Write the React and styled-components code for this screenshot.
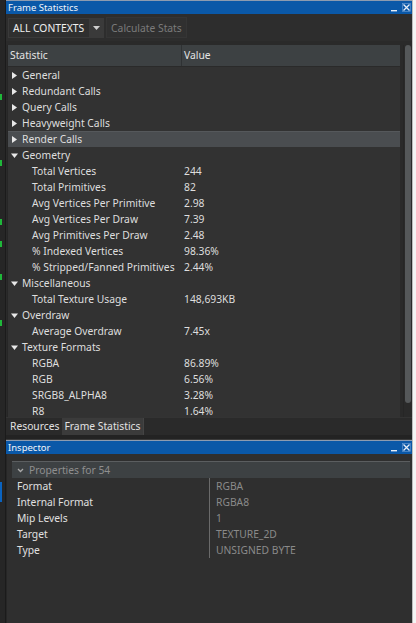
import React from 'react';
import styled, { createGlobalStyle } from 'styled-components';

const GlobalStyle = createGlobalStyle`
    *, *::before, *::after {
        box-sizing: border-box;
    }
    html, body {
        margin: 0;
        padding: 0;
        background: #f4f4f4;
    }
    body {
        font-family: "Noto Sans", "DejaVu Sans", sans-serif;
        font-size: 10.3px;
        color: #dcdcdc;
    }
`

const stats = [
    { name: 'General', kind: 'closed' },
    { name: 'Redundant Calls', kind: 'closed' },
    { name: 'Query Calls', kind: 'closed' },
    { name: 'Heavyweight Calls', kind: 'closed' },
    { name: 'Render Calls', kind: 'closed', selected: true },
    { name: 'Geometry', kind: 'open' },
    { name: 'Total Vertices', value: '244' },
    { name: 'Total Primitives', value: '82' },
    { name: 'Avg Vertices Per Primitive', value: '2.98' },
    { name: 'Avg Vertices Per Draw', value: '7.39' },
    { name: 'Avg Primitives Per Draw', value: '2.48' },
    { name: '% Indexed Vertices', value: '98.36%' },
    { name: '% Stripped/Fanned Primitives', value: '2.44%' },
    { name: 'Miscellaneous', kind: 'open' },
    { name: 'Total Texture Usage', value: '148,693KB' },
    { name: 'Overdraw', kind: 'open' },
    { name: 'Average Overdraw', value: '7.45x' },
    { name: 'Texture Formats', kind: 'open' },
    { name: 'RGBA', value: '86.89%' },
    { name: 'RGB', value: '6.56%' },
    { name: 'SRGB8_ALPHA8', value: '3.28%' },
    { name: 'R8', value: '1.64%' },
]

const props = [
    ['Format', 'RGBA'],
    ['Internal Format', 'RGBA8'],
    ['Mip Levels', '1'],
    ['Target', 'TEXTURE_2D'],
    ['Type', 'UNSIGNED BYTE'],
]

const marks = [
    { top: 94, color: '#1fb83a' },
    { top: 160, color: '#1fb83a' },
    { top: 219, color: '#1fb83a' },
    { top: 241, color: '#1fb83a' },
    { top: 274, color: '#1fb83a' },
    { top: 320, color: '#1fb83a' },
    { top: 482, color: '#0a63c0', h: 20 },
]

const Arrow = ({ open }) => (
    <svg width="7" height="7" viewBox="0 0 7 7">
        {open
            ? <polygon points="0,1.5 7,1.5 3.5,6" fill="#e8e8e8" />
            : <polygon points="1,0 6,3.5 1,7" fill="#e8e8e8" />}
    </svg>
)

const WindowButtons = () => (
    <Buttons>
        <svg width="8" height="8" viewBox="0 0 8 8">
            <rect x="1" y="6" width="6" height="1.4" fill="#e6eef8" />
        </svg>
        <svg width="9" height="9" viewBox="0 0 9 9">
            <path d="M1.5 1.5 L7.5 7.5 M7.5 1.5 L1.5 7.5" stroke="#e6eef8" strokeWidth="1.3" />
            <rect x="0.5" y="0.5" width="8" height="8" fill="none" stroke="#6f9fd6" strokeWidth="0.6" />
        </svg>
    </Buttons>
)

const App = () => {
    return (
        <Screen>
            <GlobalStyle />
            <Strip>
                {marks.map((m, i) => (
                    <Mark key={i} style={{ top: m.top, height: m.h || 6 }} color={m.color} />
                ))}
            </Strip>
            <Main>
                <TitleBar>
                    <span>Frame Statistics</span>
                    <WindowButtons />
                </TitleBar>
                <Toolbar>
                    <Combo>
                        <ComboText>ALL CONTEXTS</ComboText>
                        <ComboArrow>
                            <svg width="7" height="4" viewBox="0 0 7 4">
                                <polygon points="0,0 7,0 3.5,4" fill="#cfcfcf" />
                            </svg>
                        </ComboArrow>
                    </Combo>
                    <ToolButton disabled>Calculate Stats</ToolButton>
                </Toolbar>
                <TablePanel>
                    <Table>
                        <HeaderRow>
                            <HeaderCell>Statistic</HeaderCell>
                            <HeaderCell divider>Value</HeaderCell>
                        </HeaderRow>
                        <Body>
                            {stats.map((s) => (
                                <Row key={s.name} selected={s.selected}>
                                    <NameCell indent={s.kind ? 0 : 1}>
                                        {s.kind && <Toggle><Arrow open={s.kind === 'open'} /></Toggle>}
                                        {s.name}
                                    </NameCell>
                                    <ValueCell>{s.value}</ValueCell>
                                </Row>
                            ))}
                        </Body>
                    </Table>
                    <ScrollTrack>
                        <ScrollThumb />
                    </ScrollTrack>
                </TablePanel>
                <Tabs>
                    <Tab>Resources</Tab>
                    <Tab active>Frame Statistics</Tab>
                </Tabs>
                <Spacer />
                <TitleBar>
                    <span>Inspector</span>
                    <WindowButtons />
                </TitleBar>
                <Inspector>
                    <GroupHeader>
                        <svg width="7" height="5" viewBox="0 0 7 5">
                            <polyline points="1,1 3.5,3.5 6,1" fill="none" stroke="#a8a8a8" strokeWidth="1.3" />
                        </svg>
                        Properties for 54
                    </GroupHeader>
                    {props.map(([k, v]) => (
                        <PropRow key={k}>
                            <PropKey>{k}</PropKey>
                            <PropValue>{v}</PropValue>
                        </PropRow>
                    ))}
                </Inspector>
            </Main>
            <Edge />
        </Screen>
    )
}

export default App;

const Screen = styled.div`
    display: flex;
    width: 416px;
    height: 623px;
    overflow: hidden;
    background: #2a2a2a;
`

const Strip = styled.div`
    position: relative;
    width: 6px;
    flex-shrink: 0;
    background: #262626;
    border-right: 1px solid #1b1b1b;
`

const Mark = styled.div`
    position: absolute;
    left: 0;
    width: 2px;
    background: ${({ color }) => color};
`

const Main = styled.div`
    flex: 1;
    display: flex;
    flex-direction: column;
    min-width: 0;
    background: #2c2c2c;
`

const Edge = styled.div`
    width: 4px;
    flex-shrink: 0;
    background: #f4f4f4;
    border-left: 1px solid #bdbdbd;
`

const TitleBar = styled.div`
    height: 14px;
    flex-shrink: 0;
    display: flex;
    align-items: center;
    justify-content: space-between;
    padding: 0 1px 0 2px;
    background: #0a58a8;
    border-top: 1px solid #8c9bb0;
    color: #f0f4fa;
    font-size: 9.5px;
    line-height: 13px;
`

const Buttons = styled.div`
    display: flex;
    align-items: center;
    gap: 4px;
`

const Toolbar = styled.div`
    height: 27px;
    flex-shrink: 0;
    display: flex;
    align-items: center;
    gap: 2px;
    padding: 0 2px;
    background: #2d2d2d;
`

const Combo = styled.div`
    display: flex;
    height: 20px;
    background: #2f2f2f;
    border: 1px solid #3a3a3a;
`

const ComboText = styled.div`
    padding: 0 5px 0 4px;
    line-height: 18px;
    color: #f0f0f0;
`

const ComboArrow = styled.div`
    width: 14px;
    display: flex;
    align-items: center;
    justify-content: center;
    background: #3a3a3a;
`

const ToolButton = styled.button`
    height: 21px;
    padding: 0 4px;
    border: 1px solid #353535;
    background: #303030;
    color: #7b7b7b;
    font-family: inherit;
    font-size: 10.3px;
`

const TablePanel = styled.div`
    height: 376px;
    flex-shrink: 0;
    display: flex;
    gap: 3px;
    padding: 4px 0 0 1px;
    background: #2a2a2a;
`

const Table = styled.div`
    width: 393px;
    display: flex;
    flex-direction: column;
    overflow: hidden;
    background: #323232;
    border-left: 1px solid #262626;
`

const HeaderRow = styled.div`
    display: grid;
    grid-template-columns: 173px 1fr;
    height: 22px;
    flex-shrink: 0;
    background: #3d4143;
    border-bottom: 1px solid #2a2a2a;
`

const HeaderCell = styled.div`
    line-height: 21px;
    padding-left: 2px;
    border-left: ${({ divider }) => (divider ? '1px solid #2f3234' : 'none')};
    color: #e4e4e4;
`

const Body = styled.div`
    flex: 1;
    overflow: hidden;
`

const Row = styled.div`
    display: grid;
    grid-template-columns: 176px 1fr;
    height: 16px;
    line-height: 16px;
    background: ${({ selected }) => (selected ? '#4a4d50' : 'transparent')};
    box-shadow: ${({ selected }) => (selected ? 'inset 0 1px 0 #55585b' : 'none')};
`

const NameCell = styled.div`
    display: flex;
    align-items: center;
    gap: 4px;
    padding-left: ${({ indent }) => (indent ? '24px' : '3px')};
    white-space: nowrap;
    color: #dedede;
`

const Toggle = styled.span`
    display: flex;
    width: 7px;
`

const ValueCell = styled.div`
    color: #dedede;
    white-space: nowrap;
`

const ScrollTrack = styled.div`
    width: 9px;
    flex-shrink: 0;
    padding: 0 0 14px 0;
    background: #2a2a2a;
    border-left: 1px solid #262626;
`

const ScrollThumb = styled.div`
    height: 100%;
    width: 6px;
    margin-left: 1px;
    border-radius: 3px;
    background: #55585a;
`

const Tabs = styled.div`
    height: 18px;
    flex-shrink: 0;
    display: flex;
    align-items: stretch;
    padding-left: 2px;
    background: #2a2a2a;
    border-top: 1px solid #333;
`

const Tab = styled.div`
    padding: 0 3px 0 2px;
    line-height: 17px;
    color: #e2e2e2;
    background: ${({ active }) => (active ? '#3b3b3b' : 'transparent')};
    border-right: ${({ active }) => (active ? '1px solid #444' : 'none')};
`

const Spacer = styled.div`
    height: 5px;
    flex-shrink: 0;
    background: #232323;
    border-bottom: 1px solid #3a3a3a;
`

const Inspector = styled.div`
    flex: 1;
    padding: 7px 2px 0 5px;
    background: #2f2f2f;
    border-left: 1px solid #262626;
`

const GroupHeader = styled.div`
    height: 17px;
    display: flex;
    align-items: center;
    gap: 5px;
    padding-left: 5px;
    background: #3d4143;
    border-top: 1px solid #5b5e60;
    color: #8f8f8f;
`

const PropRow = styled.div`
    display: grid;
    grid-template-columns: 197px 1fr;
    height: 16px;
    line-height: 16px;
`

const PropKey = styled.div`
    padding-left: 5px;
    color: #e0e0e0;
`

const PropValue = styled.div`
    padding-left: 6px;
    border-left: 1px solid #6a6a6a;
    color: #8a8a8a;
`
